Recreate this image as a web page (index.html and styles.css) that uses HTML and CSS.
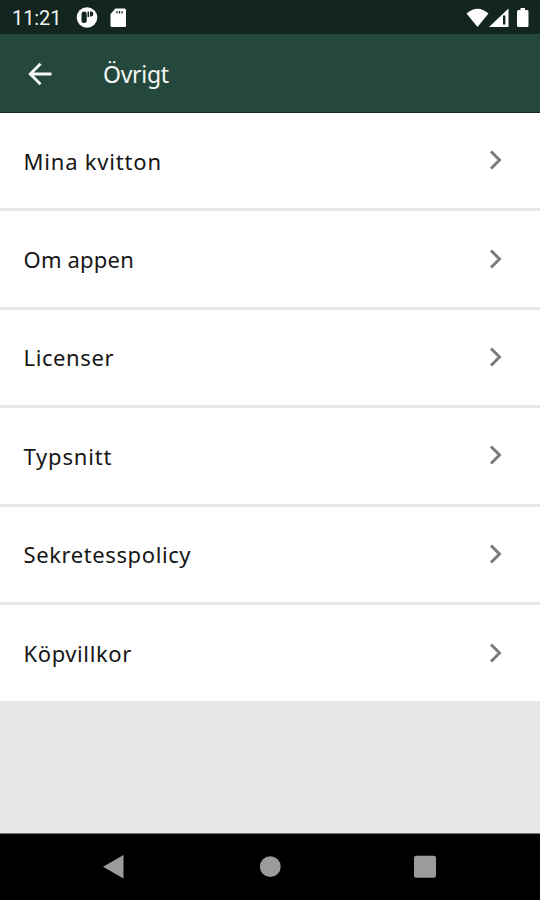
FILE: index.html
```
<!DOCTYPE html>
<html lang="sv">
<head>
<meta charset="utf-8">
<title>Övrigt</title>
<link rel="stylesheet" href="styles.css">
</head>
<body>
<div class="screen">
  <div class="status">
    <span class="clock">11:21</span>
    <svg class="notices" width="52" height="24" viewBox="0 0 52 24">
      <circle cx="11" cy="11.500" r="10.300" fill="#fff"/>
      <rect x="5.500" y="5.500" width="5.200" height="11.500" rx="2.500" fill="#13251f"/>
      <path d="M11.500 5.500h1.600v5.500h-1.600zM14 5.500h1c3 0 3 5 0 5h-1z" fill="#13251f"/>
      <path d="M39.500 2.500H48.500q1.500 0 1.500 1.500V19.500q0 1.500-1.500 1.500h-12.500q-1.500 0-1.500-1.500V8z" fill="#fff"/>
      <path d="M41 5v2.500M43.500 5v2.500M46 5v2.500" stroke="#13251f" stroke-width="1.200"/>
    </svg>
    <svg class="signals" width="66" height="24" viewBox="0 0 66 24">
      <path d="M1.500 7.500Q12.500 -2 23.500 7.500L12.500 21z" fill="#fff"/>
      <path d="M24 21L43.500 2.500V21z" fill="#fff"/>
      <path d="M38 9.500h2.400v9h-2.400z" fill="#13251f"/>
      <path d="M55.500 2h4.500v2h2q1.500 0 1.500 1.500V19.500q0 1.500-1.500 1.500h-8.500q-1.500 0-1.500-1.500V5.500q0-1.500 1.500-1.500h2z" fill="#fff"/>
    </svg>
  </div>
  <header class="bar">
    <svg class="back" width="26" height="26" viewBox="0 0 26 26"><path d="M24.500 13H3M13.500 2.800L3.300 13 13.500 23.200" fill="none" stroke="#f5f8f6" stroke-width="2.900"/></svg>
    <h1 class="title">Övrigt</h1>
  </header>
  <main class="list">
    <div class="row"><span class="label wide">Mina kvitton</span><svg class="chevron" viewBox="0 0 14 22"><path d="M2 2.500L10.500 11 2 19.500"/></svg></div>
    <div class="row"><span class="label tight">Om appen</span><svg class="chevron" viewBox="0 0 14 22"><path d="M2 2.500L10.500 11 2 19.500"/></svg></div>
    <div class="row"><span class="label">Licenser</span><svg class="chevron" viewBox="0 0 14 22"><path d="M2 2.500L10.500 11 2 19.500"/></svg></div>
    <div class="row"><span class="label wide">Typsnitt</span><svg class="chevron" viewBox="0 0 14 22"><path d="M2 2.500L10.500 11 2 19.500"/></svg></div>
    <div class="row"><span class="label">Sekretesspolicy</span><svg class="chevron" viewBox="0 0 14 22"><path d="M2 2.500L10.500 11 2 19.500"/></svg></div>
    <div class="row"><span class="label">Köpvillkor</span><svg class="chevron" viewBox="0 0 14 22"><path d="M2 2.500L10.500 11 2 19.500"/></svg></div>
  </main>
  <nav class="nav">
    <svg width="540" height="66" viewBox="0 0 540 66" fill="#9b9b9b">
      <path d="M103 32.700L123.500 21V44.500z"/>
      <circle cx="270.300" cy="32.700" r="10.400"/>
      <rect x="414" y="21.700" width="22" height="22" rx="2.200"/>
    </svg>
  </nav>
</div>
</body>
</html>
```
FILE: styles.css
```
* { box-sizing: border-box; }
body { margin: 0; background: #000; }
.screen {
  width: 540px;
  height: 900px;
  display: flex;
  flex-direction: column;
  overflow: hidden;
  background: #e7e7e7;
  font-family: "Noto Sans", sans-serif;
}
.status {
  height: 34px;
  flex: none;
  display: flex;
  align-items: center;
  padding: 1px 9px 0 12px;
  background: #13251f;
}
.clock {
  width: 64px;
  font: 400 20px/24px Roboto, sans-serif;
  letter-spacing: -0.1px;
  color: #f2f4f3;
}
.signals { margin-left: auto; }
.bar {
  height: 79px;
  flex: none;
  display: flex;
  align-items: center;
  padding: 1px 0 0 27px;
  background: #25483d;
  border-bottom: 1px solid #152b23;
}
.title {
  margin: 0 0 0 50px;
  font-size: 23px;
  font-weight: 400;
  line-height: 32px;
  letter-spacing: -0.3px;
  color: #f5f8f6;
}
.list { flex: 1; }
.row {
  height: 98.400px;
  display: flex;
  align-items: center;
  justify-content: space-between;
  padding: 0 37px 0 23.500px;
  background: #fff;
  border-bottom: 3px solid #e7e7e7;
}
.row:last-child { border-bottom-width: 2px; }
.label {
  font-size: 22px;
  line-height: 32px;
  letter-spacing: 0.600px;
  color: #161616;
}
.label.wide { letter-spacing: 0.800px; }
.label.tight { letter-spacing: 0.200px; }
.chevron {
  width: 14px;
  height: 22px;
  margin-bottom: 1px;
  fill: none;
  stroke: #7b7b7b;
  stroke-width: 3;
}
.nav {
  height: 67px;
  flex: none;
  background: #000;
  border-top: 1px solid #777;
}
.nav svg { display: block; }
```
